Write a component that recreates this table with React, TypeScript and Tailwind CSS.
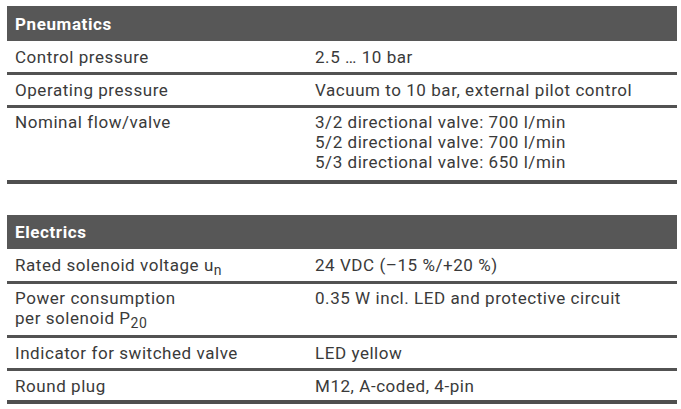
type Row = {
  label: React.ReactNode;
  value: React.ReactNode;
  pad: string;
};

function Section({ title, headerH, rows }: { title: string; headerH: string; rows: Row[] }) {
  return (
    <div>
      <div className={`${headerH} bg-[#575757] flex items-center px-2`}>
        <span className="text-white font-bold text-[17px] tracking-[0.6px]">{title}</span>
      </div>
      {rows.map((r, i) => (
        <div key={i}>
          <div className={`grid grid-cols-[300px_1fr] ${r.pad}`}>
            <div className="pl-2">{r.label}</div>
            <div className="pl-2">{r.value}</div>
          </div>
          <div className={i === rows.length - 1 ? 'h-[4px] bg-[#4f4f4f]' : 'h-[3px] bg-[#525252]'} />
        </div>
      ))}
    </div>
  );
}

export default function App() {
  const pneumatics: Row[] = [
    { label: 'Control pressure', value: '2.5 … 10 bar', pad: 'pt-[6px] pb-[5px]' },
    { label: 'Operating pressure', value: 'Vacuum to 10 bar, external pilot control', pad: 'pt-[5px] pb-[5px]' },
    {
      label: 'Nominal flow/valve',
      value: (
        <>
          <div>3/2 directional valve: 700 l/min</div>
          <div>5/2 directional valve: 700 l/min</div>
          <div>5/3 directional valve: 650 l/min</div>
        </>
      ),
      pad: 'pt-[4px] pb-[8px]',
    },
  ];

  const electrics: Row[] = [
    {
      label: (
        <>
          Rated solenoid voltage u<sub className="text-[14px]">n</sub>
        </>
      ),
      value: '24 VDC (–15 %/+20 %)',
      pad: 'pt-[6px] pb-[6px]',
    },
    {
      label: (
        <>
          <div>Power consumption</div>
          <div>
            per solenoid P<sub className="text-[14px]">20</sub>
          </div>
        </>
      ),
      value: '0.35 W incl. LED and protective circuit',
      pad: 'pt-[4px] pb-[7px]',
    },
    { label: 'Indicator for switched valve', value: 'LED yellow', pad: 'pt-[5px] pb-[5px]' },
    { label: 'Round plug', value: 'M12, A-coded, 4-pin', pad: 'pt-[5px] pb-[4px]' },
  ];

  return (
    <div
      className="w-[681px] h-[409px] bg-white pt-[6px] pl-[7px] pr-[4px] text-[17px] leading-[20px] text-[#3a3a3a] tracking-[0.55px]"
      style={{ fontFamily: 'Roboto, "Liberation Sans", sans-serif' }}
    >
      <Section title="Pneumatics" headerH="h-[35px]" rows={pneumatics} />
      <div className="h-[31px]" />
      <Section title="Electrics" headerH="h-[34px]" rows={electrics} />
    </div>
  );
}
